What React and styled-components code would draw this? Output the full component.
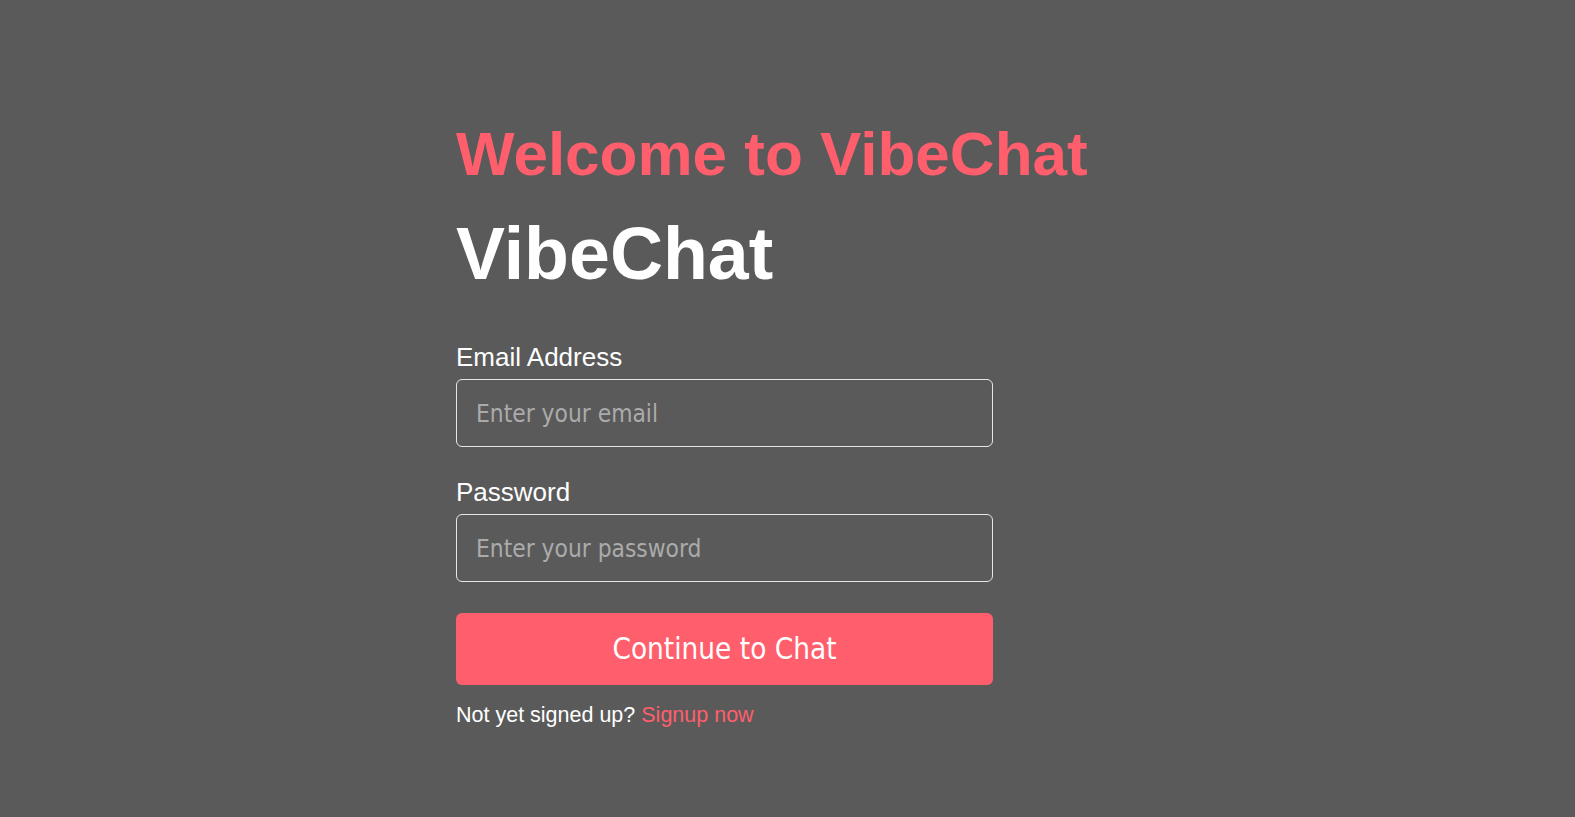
import React from "react";
import styled, { createGlobalStyle } from "styled-components";

const GlobalStyle = createGlobalStyle`
  html, body {
    margin: 0;
    padding: 0;
    background: #5a5a5a;
  }
  body {
    font-family: "Liberation Sans", Arial, sans-serif;
  }
`;

const Page = styled.div`
  min-height: 817px;
  background: #5a5a5a;
  display: flex;
  justify-content: center;
`;

const Container = styled.div`
  width: 663px;
  padding-top: 119px;
  display: flex;
  flex-direction: column;
`;

const Welcome = styled.h1`
  margin: 0;
  font-family: "Liberation Sans", Arial, sans-serif;
  font-weight: bold;
  font-size: 62px;
  line-height: 70px;
  color: #ff5e6c;
  white-space: nowrap;
`;

const Brand = styled.h2`
  margin: 23px 0 0;
  font-family: "Liberation Sans", Arial, sans-serif;
  font-weight: bold;
  font-size: 73.5px;
  line-height: 84px;
  color: #ffffff;
`;

const Form = styled.form`
  width: 537px;
  margin-top: 46px;
  display: flex;
  flex-direction: column;
`;

const Field = styled.div`
  display: flex;
  flex-direction: column;
  gap: 6px;
  margin-bottom: ${(p) => p.$gap || 30}px;
`;

const Label = styled.label`
  font-family: "Liberation Sans", Arial, sans-serif;
  font-size: 26px;
  line-height: 31px;
  color: #ffffff;
`;

const Input = styled.input`
  box-sizing: border-box;
  width: 100%;
  height: 68px;
  padding: 0 19px;
  border: 1px solid #e6e6e6;
  border-radius: 6px;
  background: transparent;
  color: #ffffff;
  font-family: "DejaVu Sans Condensed", "DejaVu Sans", sans-serif;
  font-size: 24.3px;
  outline: none;

  &::placeholder {
    color: #ababab;
  }
`;

const Button = styled.button`
  height: 72px;
  width: 100%;
  border: none;
  border-radius: 6px;
  background: #ff5e6c;
  color: #ffffff;
  font-family: "DejaVu Sans Condensed", "DejaVu Sans", sans-serif;
  font-size: 29.4px;
  cursor: pointer;
`;

const Footer = styled.p`
  margin: 17px 0 0;
  font-family: "Liberation Sans", Arial, sans-serif;
  font-size: 21.5px;
  line-height: 26px;
  color: #ffffff;
`;

const SignupLink = styled.a`
  color: #ff5e6c;
  text-decoration: none;
`;

export default function App() {
  return (
    <>
      <GlobalStyle />
      <Page>
        <Container>
          <Welcome>Welcome to VibeChat</Welcome>
          <Brand>VibeChat</Brand>
          <Form onSubmit={(e) => e.preventDefault()}>
            <Field>
              <Label htmlFor="email">Email Address</Label>
              <Input id="email" type="email" placeholder="Enter your email" />
            </Field>
            <Field $gap={31}>
              <Label htmlFor="password">Password</Label>
              <Input id="password" type="password" placeholder="Enter your password" />
            </Field>
            <Button type="submit">Continue to Chat</Button>
            <Footer>
              Not yet signed up? <SignupLink href="#">Signup now</SignupLink>
            </Footer>
          </Form>
        </Container>
      </Page>
    </>
  );
}
